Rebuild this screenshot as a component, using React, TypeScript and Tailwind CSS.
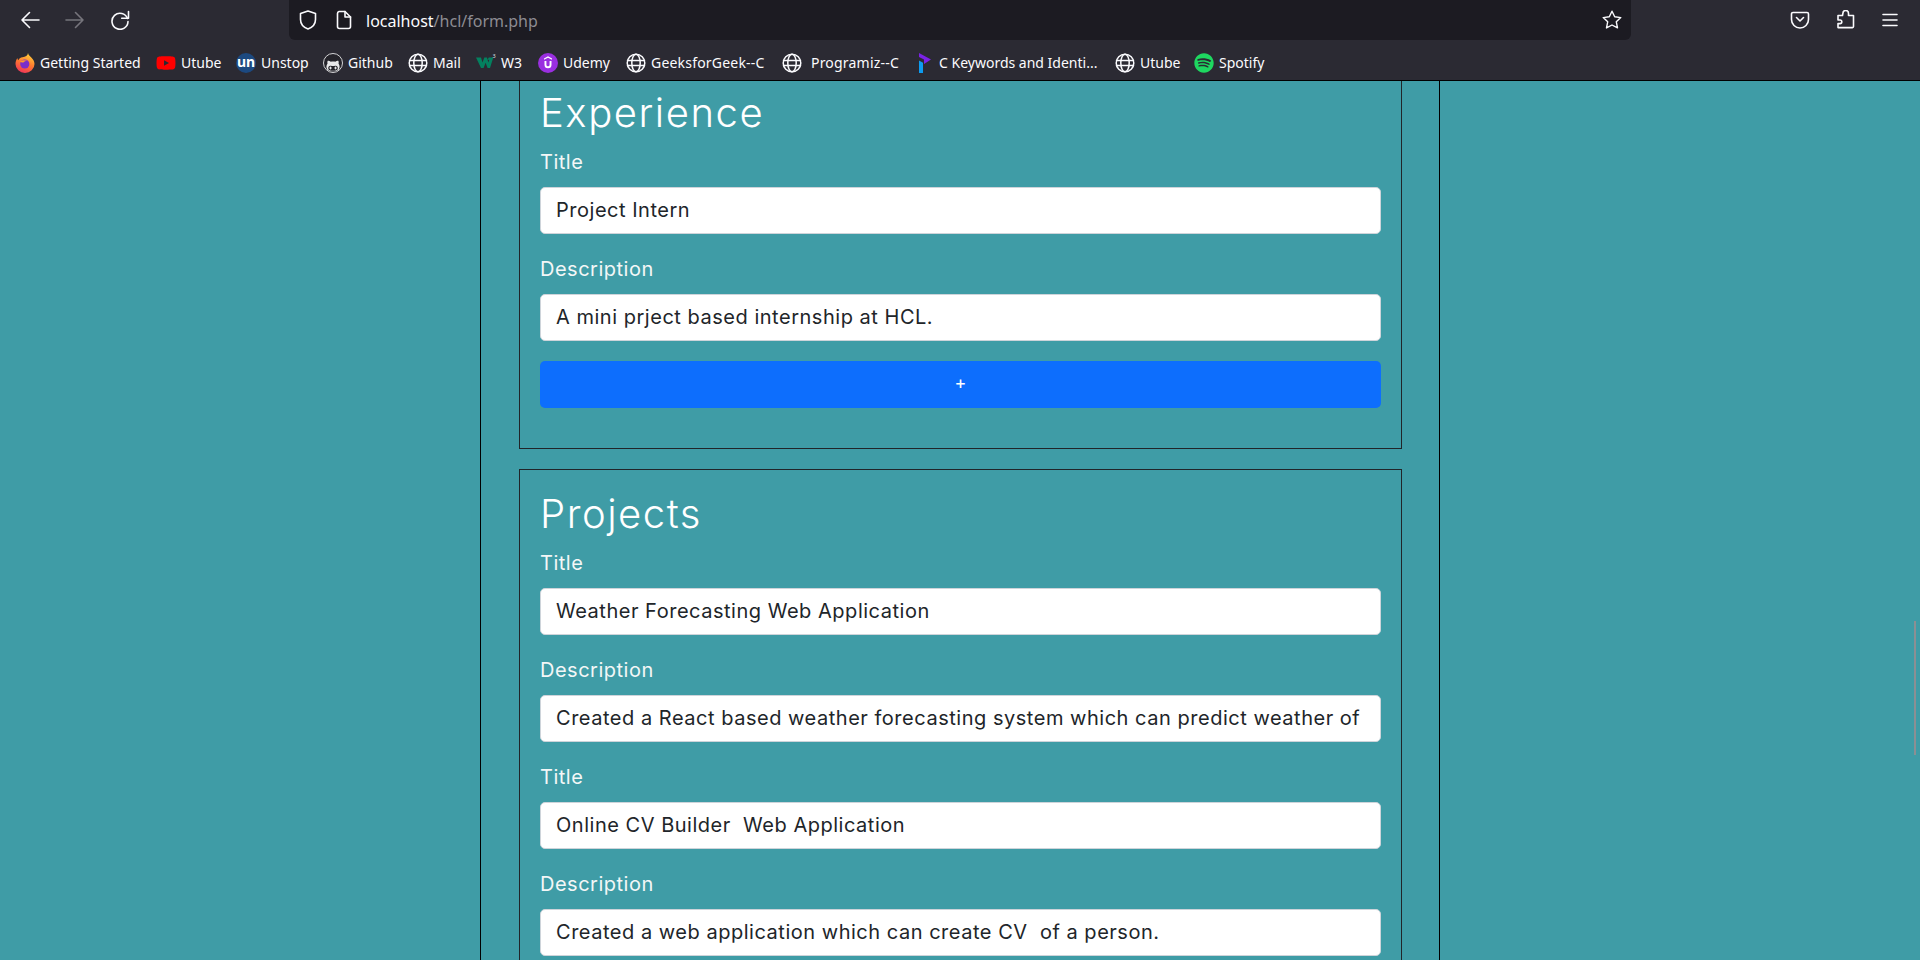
import type { ReactNode } from "react";
import { FaGithubAlt, FaSpotify, FaYoutube } from "react-icons/fa";

const stroke = { fill: "none", stroke: "#fbfbfe", strokeWidth: 1.6, strokeLinecap: "round", strokeLinejoin: "round" } as const;

function Globe() {
  return (
    <svg className="shrink-0" width="20" height="20" viewBox="0 0 20 20" {...stroke} strokeWidth={1.5}>
      <circle cx="10" cy="10" r="8.8" />
      <ellipse cx="10" cy="10" rx="4.2" ry="8.8" />
      <path d="M1.5 7.4h17M1.5 12.6h17" />
    </svg>
  );
}

function FirefoxIcon() {
  return (
    <svg className="shrink-0" width="20" height="20" viewBox="0 0 20 20">
      <defs>
        <linearGradient id="fx" x1="0.7" y1="0" x2="0.3" y2="1">
          <stop offset="0" stopColor="#ffd43b" />
          <stop offset="0.5" stopColor="#ff7a2f" />
          <stop offset="1" stopColor="#f0325a" />
        </linearGradient>
      </defs>
      <path d="M13 0c.4 2.2 2 3 3.300 4.600C18.600 7 19.500 9 19.500 11a9.500 9 0 0 1-19 0C.5 8.600 1.300 6.500 2.400 5c0 1 .4 1.800 1 2.200C4 5.500 5.500 4.500 7.500 4.300 10.500 3.800 12.800 2.500 13 0z" fill="url(#fx)" />
      <circle cx="9.800" cy="11" r="4.600" fill="#7b2fc9" />
      <path d="M5 8.500c2-1.500 5.500-1.700 7.500-.4-1.500-.2-3 .2-3.800 1.200C7.500 9.700 6 9.500 5 8.500z" fill="#ff9a2e" />
    </svg>
  );
}

function UnstopIcon() {
  return (
    <div className="flex h-5 w-5 shrink-0 items-center justify-center rounded-full bg-[#1c4980] pb-[3px] text-[14px] font-bold leading-none text-white">
      un
    </div>
  );
}

function GithubIcon() {
  return (
    <div className="flex h-5 w-5 shrink-0 items-end justify-center overflow-hidden rounded-full border-[1.5px] border-[#d4d4d6] bg-[#24232a]">
      <FaGithubAlt className="h-[14px] w-[14px] translate-y-[1px] text-[#e8e8ea]" />
    </div>
  );
}

function W3Icon() {
  return (
    <svg className="shrink-0" width="20" height="20" viewBox="0 0 20 20">
      <path d="M0 4.500h5l1.500 5 1.800-5h2.600l1.500 5 .9-2.800h-1.800l1.300-2.200h4.500l-3.300 10.500h-2.400L9.600 9.800 7.600 15H5z" fill="#04805f" />
      <text x="16.500" y="5" fontSize="5.500" fill="#dfe3e8" fontFamily="Noto Sans, sans-serif">3</text>
    </svg>
  );
}

function UdemyIcon() {
  return (
    <svg className="shrink-0" width="20" height="20" viewBox="0 0 20 20">
      <circle cx="10" cy="10" r="10" fill="#9a2fe0" />
      <path d="M10 3.200 14 5.400v1.300L10 4.700 6 6.700V5.400z" fill="#fff" />
      <path d="M6.500 8v3.800a3.500 3.500 0 0 0 7 0V8h-1.900v3.700a1.600 1.600 0 0 1-3.200 0V8z" fill="#fff" />
    </svg>
  );
}

function ProgramizIcon() {
  return (
    <svg className="shrink-0" width="14" height="20" viewBox="0 0 14 20">
      <path d="M1 0l12 6.500L6 11V6.500L1 4z" fill="#7a22e6" />
      <path d="M1 7.500 5 9.800V20H1z" fill="#0d9bf0" />
    </svg>
  );
}

const bookmarks: { icon: ReactNode; label: string; cls: string }[] = [
  { icon: <FirefoxIcon />, label: "Getting Started", cls: "w-[141px] ml-[15px]" },
  { icon: <FaYoutube className="h-5 w-5 shrink-0 text-[#ff0000]" />, label: "Utube", cls: "w-[80px]" },
  { icon: <UnstopIcon />, label: "Unstop", cls: "w-[87px]" },
  { icon: <GithubIcon />, label: "Github", cls: "w-[85px]" },
  { icon: <Globe />, label: "Mail", cls: "w-[68px]" },
  { icon: <W3Icon />, label: "W3", cls: "w-[62px]" },
  { icon: <UdemyIcon />, label: "Udemy", cls: "w-[88px]" },
  { icon: <Globe />, label: "GeeksforGeek--C", cls: "w-[156px] tracking-[0.2px]" },
  { icon: <Globe />, label: "Programiz--C", cls: "w-[136px] gap-[9px] tracking-[0.2px]" },
  { icon: <ProgramizIcon />, label: "C Keywords and Identi...", cls: "w-[197px] gap-[7px]" },
  { icon: <Globe />, label: "Utube", cls: "w-[79px]" },
  { icon: <FaSpotify className="h-5 w-5 shrink-0 text-[#1ed760]" />, label: "Spotify", cls: "w-[72px]" },
];

function BrowserChrome() {
  return (
    <div className="h-[81px] shrink-0 border-b border-black bg-[#2b2a33] font-['Noto_Sans',sans-serif] text-[#fbfbfe]">
      <div className="flex h-10 items-center">
        <div className="flex w-[289px] items-center pl-5">
          <svg width="20" height="20" viewBox="0 0 20 20" {...stroke}>
            <path d="M19 10H2M9.500 2.500 2 10l7.500 7.500" />
          </svg>
          <svg className="ml-[25px]" width="20" height="20" viewBox="0 0 20 20" {...stroke} stroke="#76757c">
            <path d="M1 10h17M10.500 2.500 18 10l-7.500 7.500" />
          </svg>
          <svg className="ml-[25px]" width="20" height="20" viewBox="0 0 20 20" {...stroke}>
            <path d="M17.500 8.500A8 8 0 1 0 18 11.500" />
            <path d="M18.500 1.500v6.800h-6.800" />
          </svg>
        </div>
        <div className="flex h-10 w-[1342px] items-center rounded-b-md bg-[#1c1b22] pl-[10px] pr-[9px]">
          <svg width="18" height="20" viewBox="0 0 18 20" {...stroke}>
            <path d="M9 1 1.500 3.500v6C1.500 14.500 5 17.500 9 19c4-1.500 7.500-4.500 7.500-9.500v-6z" />
          </svg>
          <svg className="ml-[19px]" width="16" height="20" viewBox="0 0 16 20" {...stroke}>
            <path d="M3 1.500h6L14.500 7v9.500a2 2 0 0 1-2 2h-9a2 2 0 0 1-2-2v-13a2 2 0 0 1 1.500-2z" />
            <path d="M9 1.500V7h5.500" />
          </svg>
          <div className="ml-[14px] pt-[2px] text-[16px] leading-none">
            localhost<span className="text-[#8d8c92]">/hcl/form.php</span>
          </div>
          <svg className="ml-auto" width="20" height="20" viewBox="0 0 20 20" {...stroke} strokeWidth={1.4}>
            <path d="m10 1.200 2.700 5.600 6.100.8-4.500 4.200 1.200 6.100L10 15l-5.500 2.900 1.200-6.100-4.500-4.200 6.100-.8z" />
          </svg>
        </div>
        <svg className="ml-[159px]" width="20" height="20" viewBox="0 0 20 20" {...stroke}>
          <path d="M3 2.500h14a1.500 1.500 0 0 1 1.500 1.500v5.500a8.500 8.500 0 0 1-17 0V4A1.500 1.500 0 0 1 3 2.500z" />
          <path d="m6.500 7.500 3.500 3.500 3.500-3.500" />
        </svg>
        <svg className="ml-[26px]" width="20" height="20" viewBox="0 0 20 20" {...stroke}>
          <path d="M8 6.500H3.500v4.500h2a1.800 1.800 0 0 1 0 3.600h-2v4h14.500a1 1 0 0 0 1-1V6.500h-5V4.300a2.800 2.800 0 0 0-5.600 0z" transform="translate(-1.500 -1)" />
        </svg>
        <svg className="ml-[24px]" width="20" height="20" viewBox="0 0 20 20" {...stroke}>
          <path d="M3 4.500h14M3 10h14M3 15.500h14" />
        </svg>
      </div>
      <div className="flex h-10 items-center pt-[6px] text-[14px] leading-none">
        {bookmarks.map((b, i) => (
          <div key={i} className={`flex shrink-0 items-center gap-[5px] ${b.cls}`}>
            {b.icon}
            <span className="whitespace-nowrap">{b.label}</span>
          </div>
        ))}
      </div>
    </div>
  );
}

function Field({ label, value }: { label: string; value: string }) {
  return (
    <div className="mb-5">
      <div className="mb-[10px] text-[20px] leading-[30px] tracking-[0.5px] text-[#f3f7f7]">{label}</div>
      <input
        readOnly
        value={value}
        className="block h-[47px] w-full rounded-[5px] border border-[#ced4da] bg-white px-[15px] pb-[2px] text-[20px] tracking-[0.52px] text-[#212529] outline-none"
      />
    </div>
  );
}

function Heading({ children }: { children: ReactNode }) {
  return <h1 className="mb-[10px] text-[40px] font-light leading-[48px] tracking-[1.55px] text-white">{children}</h1>;
}

export default function App() {
  return (
    <div className="relative flex h-screen flex-col overflow-hidden bg-[#3f9ca6] font-['Inter',sans-serif]">
      <BrowserChrome />
      <div className="flex-1 overflow-hidden">
        {/* page is scrolled, top of the first card is out of view */}
        <div className="mx-auto -mt-[13px] w-[960px] border-x border-black pl-[38px]">
          <div className="w-[883px] border border-[#212529] p-5">
            <Heading>Experience</Heading>
            <Field label="Title" value="Project Intern" />
            <Field label="Description" value="A mini prject based internship at HCL." />
            <button className="mb-5 block h-[47px] w-full rounded-[5px] bg-[#0d6efd] pb-[4px] text-[18px] text-white">+</button>
          </div>
          <div className="mt-5 w-[883px] border border-[#212529] p-5">
            <Heading>Projects</Heading>
            <Field label="Title" value="Weather Forecasting Web Application" />
            <Field label="Description" value="Created a React based weather forecasting system which can predict weather of" />
            <Field label="Title" value="Online CV Builder  Web Application" />
            <Field label="Description" value="Created a web application which can create CV  of a person." />
          </div>
        </div>
      </div>
      <div className="absolute right-[4px] top-[621px] h-[134px] w-[2px] bg-[#8b8f93]" />
    </div>
  );
}
